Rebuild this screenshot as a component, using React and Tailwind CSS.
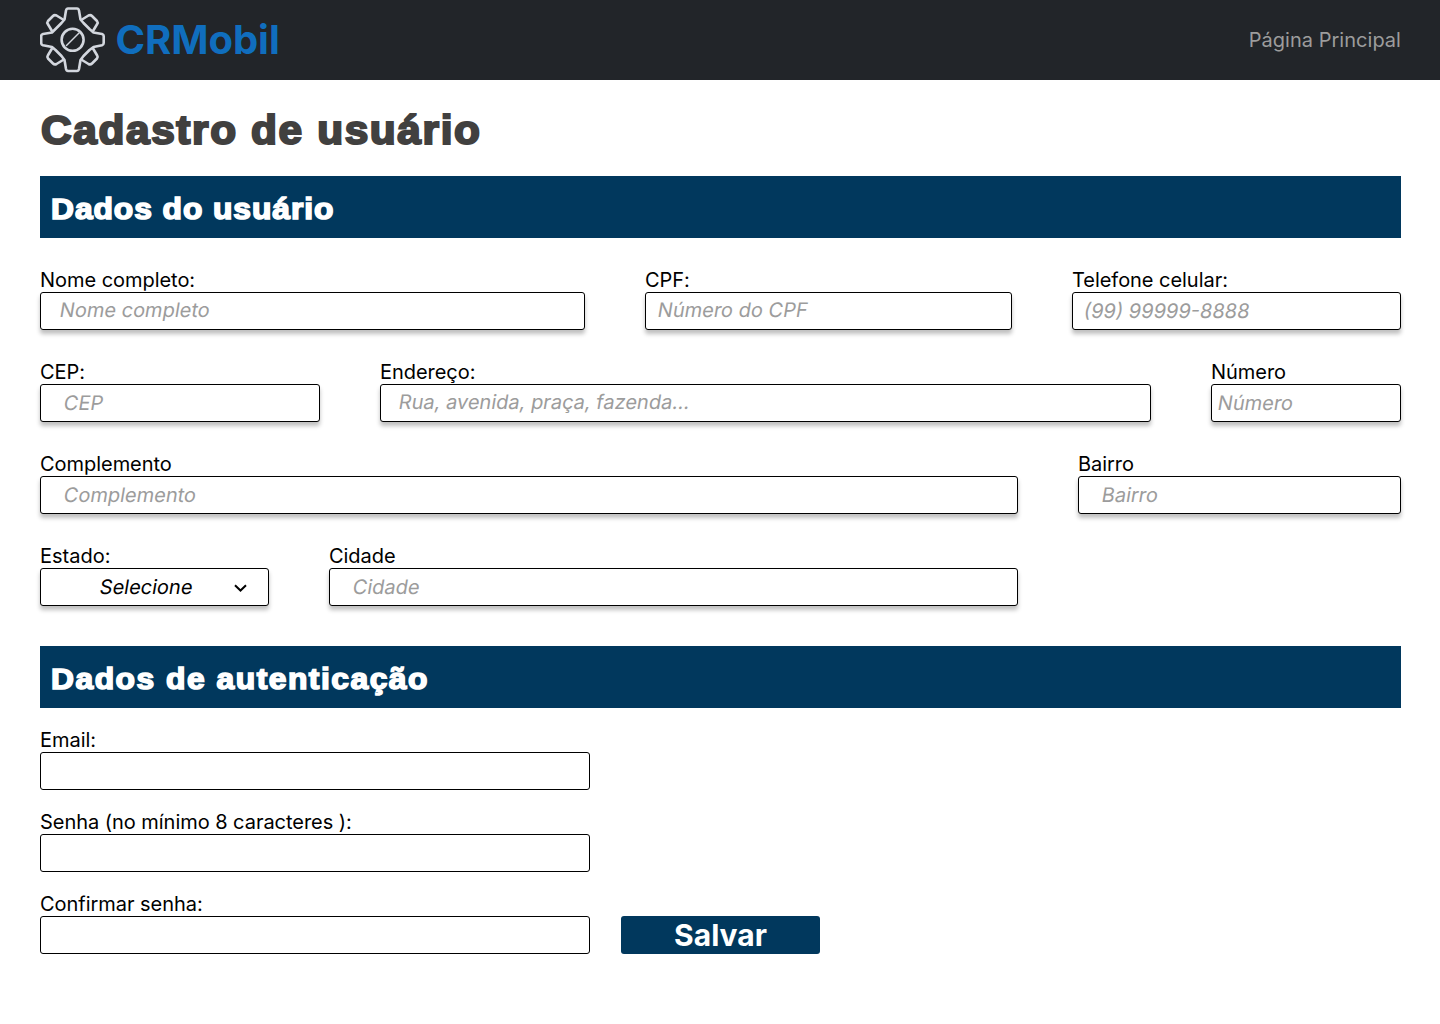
function Gear() {
  return (
    <svg className="h-[66px] w-[66px] shrink-0" viewBox="0 0 66 66" fill="none" stroke="#d3d7de" strokeWidth="2.6" strokeLinejoin="round" strokeLinecap="round">
      <path d="M28 1.5H37Q38.5 1.5 39 3.5L40.5 12.5L43.5 16L49.5 22L53.5 25.5L62 27Q63.7 27.5 63.7 29V36Q63.7 37.7 62 38.3L53.5 40L49.5 43L43.5 49L40.5 53L39 62Q38.5 64 37 64H28Q26.5 64 26 62L24.5 53L21.5 49L15.5 43L12 40L3 38.3Q1.2 37.7 1.2 36V29Q1.2 27.5 3 27L12 25.5L15.5 22L21.5 16L24.5 12.5L26 3.5Q26.5 1.5 28 1.5Z" />
      <path d="M23 12.5L16.5 8.5Q14.5 7.5 13 9L8 14Q6.8 15.5 7.8 17L12 24" />
      <path d="M42 12.5L48.5 8.5Q50.5 7.5 52 9L57 14Q58.2 15.5 57.2 17L53 24" />
      <path d="M23 53L16.5 57Q14.5 58 13 56.5L8 51.5Q6.8 50 7.8 48.5L12 41.5" />
      <path d="M42 53L48.5 57Q50.5 58 52 56.5L57 51.5Q58.2 50 57.2 48.5L53 41.5" />
      <circle cx="32.6" cy="32.8" r="11" />
      <path d="M26.5 38.5L39 26" strokeWidth="1.5" />
    </svg>
  );
}

function Field({ label, placeholder, className, pad = "", shadow = true }) {
  return (
    <div className={`flex flex-col ${className}`}>
      <span className="h-6 text-[20px] leading-6 tracking-[-0.04px] whitespace-pre text-black">{label}</span>
      <div
        className={`flex h-[38px] w-full items-center rounded-[3px] border border-black bg-white text-[20px] leading-6 text-[#9c9c9c] ${shadow ? "shadow-[0_4px_4px_rgba(0,0,0,0.25)]" : ""} ${pad}`}
      >
        {placeholder && <span className="-skew-x-[9.4deg] whitespace-nowrap">{placeholder}</span>}
      </div>
    </div>
  );
}

function SectionTitle({ children, spacing }) {
  return (
    <h2 className="flex h-[62px] items-center bg-[#01385d] pt-[3px] pl-[11px] font-['Liberation_Sans',sans-serif] text-[30px] font-bold text-white">
      <span className={`inline-block origin-left scale-x-[1.06] whitespace-nowrap [-webkit-text-stroke:1.6px_#fff] ${spacing}`}>{children}</span>
    </h2>
  );
}

export default function App() {
  return (
    <div className="h-[1024px] w-[1440px] overflow-hidden bg-white font-['Inter',sans-serif]">
      <header className="flex h-20 items-center justify-between bg-[#222529] pr-[39px] pl-10">
        <div className="flex items-center gap-[9.5px]">
          <Gear />
          <span className="text-[40px] leading-[48px] font-bold tracking-[-0.05px] text-[#106ebe]">CRMobil</span>
        </div>
        <a className="text-[20px] leading-6 tracking-[0.03px] text-[#9c9c9c]">Página Principal</a>
      </header>

      <main className="pr-[39px] pl-10">
        <h1 className="flex h-24 items-center pt-1 pl-[0.5px] font-['Liberation_Sans',sans-serif] text-[40px] font-bold text-[#41403f]">
          <span className="inline-block origin-left scale-x-[1.06] tracking-[1.52px] whitespace-nowrap [-webkit-text-stroke:2.1px_#41403f]">Cadastro de usuário</span>
        </h1>

        <SectionTitle spacing="tracking-[0.87px]">Dados do usuário</SectionTitle>

        <div className="mt-[30px] flex flex-col gap-[30px]">
          <div className="flex gap-[60px]">
            <Field label="Nome completo:" placeholder="Nome completo" className="w-[545px]" pad="pl-[19px] pb-[2px]" />
            <Field label="CPF:" placeholder="Número do CPF" className="w-[367px]" pad="pl-[11.5px] pb-[2px]" />
            <Field label="Telefone celular:" placeholder="(99) 99999-8888" className="w-[329px]" pad="pl-[11px]" />
          </div>
          <div className="flex gap-[60px]">
            <Field label="CEP:" placeholder="CEP" className="w-[280px]" pad="pl-[23px]" />
            <Field label="Endereço:" placeholder="Rua, avenida, praça, fazenda..." className="w-[771px]" pad="pl-[18px] pb-[2px]" />
            <Field label="Número" placeholder="Número" className="w-[190px]" pad="pl-[6px]" />
          </div>
          <div className="flex gap-[60px]">
            <Field label="Complemento" placeholder="Complemento" className="w-[978px]" pad="pl-[22.5px]" />
            <Field label="Bairro" placeholder="Bairro" className="w-[323px]" pad="pl-[23px]" />
          </div>
          <div className="flex gap-[60px]">
            <div className="flex w-[229px] flex-col">
              <span className="h-6 text-[20px] leading-6">Estado:</span>
              <button className="flex h-[38px] items-center justify-between rounded-[3px] border border-black bg-white pr-[21px] pl-[59px] text-[20px] leading-6 shadow-[0_4px_4px_rgba(0,0,0,0.25)]">
                <span className="-skew-x-[9.4deg]">Selecione</span>
                <svg className="mt-[1px] h-2 w-[13px]" viewBox="0 0 13 8" fill="none" stroke="#000" strokeWidth="2">
                  <path d="M1 1.2L6.5 6.5L12 1.2" />
                </svg>
              </button>
            </div>
            <Field label="Cidade" placeholder="Cidade" className="w-[689px]" pad="pl-[23px]" />
          </div>
        </div>

        <div className="mt-10">
          <SectionTitle spacing="tracking-[1.42px]">Dados de autenticação</SectionTitle>
        </div>

        <div className="mt-5 flex items-end gap-[31px]">
          <div className="flex w-[550px] flex-col gap-5">
            <Field label="Email:" className="w-full" shadow={false} />
            <Field label="Senha (no mínimo 8 caracteres ):" className="w-full" shadow={false} />
            <Field label="Confirmar senha:" className="w-full" shadow={false} />
          </div>
          <button className="h-[38px] w-[199px] rounded-[3px] bg-[#01385d] text-[30px] leading-9 font-bold text-white">Salvar</button>
        </div>
      </main>
    </div>
  );
}
